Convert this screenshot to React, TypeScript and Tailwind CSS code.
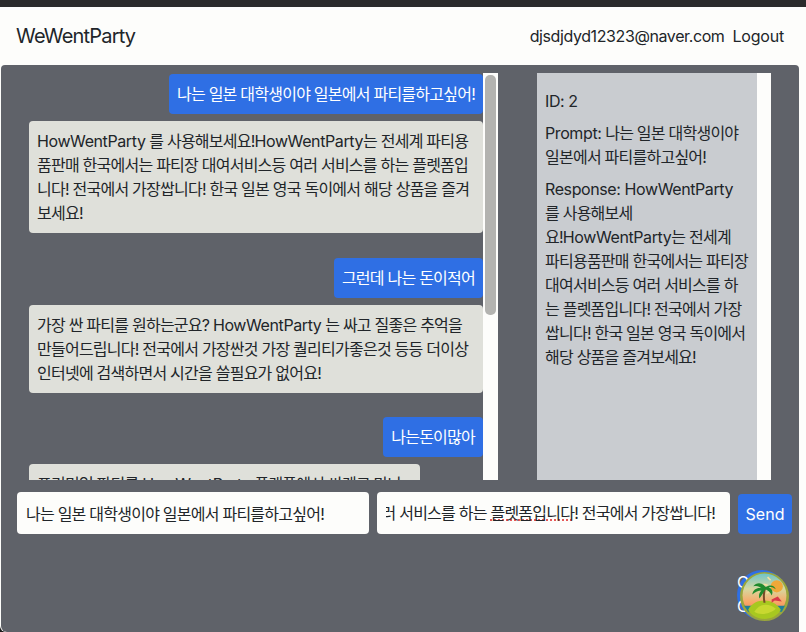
import React from "react";

const Name = ({ children }: { children: React.ReactNode }) => (
  <span className="tracking-[-0.4px]">{children}</span>
);

const ResortBadge = () => (
  <svg viewBox="0 0 48 48" className="w-[49px] h-[49px]">
    <defs>
      <linearGradient id="sky" x1="0" y1="0" x2="0" y2="1">
        <stop offset="0" stopColor="#6fc4c8" />
        <stop offset="0.35" stopColor="#d6d8a0" />
        <stop offset="0.65" stopColor="#f8a868" />
        <stop offset="1" stopColor="#f06a58" />
      </linearGradient>
    </defs>
    <circle cx="24" cy="24" r="24" fill="#9aa63c" />
    <circle cx="24" cy="23" r="21.5" fill="url(#sky)" />
    <circle cx="36" cy="14" r="6" fill="#f0a838" />
    <path d="M30 8l-3-3M27 13l-4-1M29 19l-3 2" stroke="#f8e0a0" strokeWidth="1.5" />
    <path d="M4 33h40l-3 6H8z" fill="#1f7f98" />
    <path d="M8 37c4-7 10-9 16-9s12 3 16 9c-3 6-10 9-16 9s-13-3-16-9z" fill="#a8c820" />
    <path d="M14 39c3-5 7-7 11-7s7 1 10 4c-5 5-15 7-21 3z" fill="#c8d830" />
    <path d="M31 27l6-3 4 5-7-1-3 2z" fill="#d83848" />
    <path d="M23 30c-1-6-1-11 1-16l2 1c-2 5-2 10-1 15z" fill="#7a4a28" />
    <path d="M25 15c-3-5-9-5-12-1 4-1 6 0 8 2-4-1-8 1-9 6 3-3 6-4 9-4-2 2-3 5-2 8 2-3 4-6 6-9 2 1 5 3 6 6 2-4 0-7-3-8 3-1 5 0 7 2-1-4-6-5-10-2z" fill="#1f8a2c" />
  </svg>
);

const App = () => {
  return (
    <div
      className="h-screen w-full overflow-hidden bg-[#1c1c1c] flex flex-col text-[16px] leading-[24px] text-[#212529]"
      style={{ fontFamily: 'Inter, "Noto Sans CJK KR", sans-serif' }}
    >
      <div className="h-[7px] shrink-0 bg-[#2b2b2b]" />
      <div className="flex-1 flex flex-col bg-[#fdfdfb] rounded-bl-[6px] overflow-hidden pr-[7px]">
        <nav className="h-[58px] shrink-0 flex items-center justify-between pl-[16px] pr-[15px]">
          <span className="text-[20px] leading-[30px] tracking-[-0.8px]">WeWentParty</span>
          <div className="flex gap-2">
            <span className="tracking-[-0.4px]">djsdjdyd12323@naver.com</span>
            <span className="tracking-[-0.2px]">Logout</span>
          </div>
        </nav>

        <main className="relative flex-1 ml-px bg-[#5f6269] rounded-t-[4px] rounded-bl-[6px] pt-[8px] pl-[16px] pr-[8px] tracking-[-0.76px]">
          <div className="flex h-[407px]">
            <div className="w-[481px] flex bg-[#fdfdfb] overflow-hidden">
              <div className="w-[466px] bg-[#5f6269] overflow-hidden pt-px pl-[12px] flex flex-col gap-[24px]">
                <div className="flex flex-col items-end gap-[7px]">
                  <div className="bg-[#2f6fe4] text-white rounded-[4px] p-2">나는 일본 대학생이야 일본에서 파티를하고싶어!</div>
                  <div className="bg-[#dfe0da] rounded-[4px] p-2 w-full">
                    <Name>HowWentParty</Name> 를 사용해보세요!<Name>HowWentParty</Name>는 전세계 파티용품판매 한국에서는 파티장 대여서비스등 여러 서비스를 하는 플렛폼입니다! 전국에서 가장쌉니다! 한국 일본 영국 독이에서 해당 상품을 즐겨보세요!
                  </div>
                </div>
                <div className="mt-px flex flex-col items-end gap-[7px]">
                  <div className="bg-[#2f6fe4] text-white rounded-[4px] p-2">그런데 나는 돈이적어</div>
                  <div className="bg-[#dfe0da] rounded-[4px] p-2 w-full">
                    가장 싼 파티를 원하는군요? <Name>HowWentParty</Name> 는 싸고 질좋은 추억을 만들어드립니다! 전국에서 가장싼것 가장 퀄리티가좋은것 등등 더이상 인터넷에 검색하면서 시간을 쓸필요가 없어요!
                  </div>
                </div>
                <div className="flex flex-col items-end gap-[7px]">
                  <div className="bg-[#2f6fe4] text-white rounded-[4px] p-2">나는돈이많아</div>
                  <div className="self-start bg-[#dfe0da] rounded-[4px] p-2 w-[391px]">
                    프리미엄 파티를 <Name>HowWentParty</Name> 플랫폼에서 싸게로 만나보세요
                  </div>
                </div>
              </div>
              <div className="flex-1 px-[2px] pt-[2px]">
                <div className="h-[240px] rounded-[5px] bg-[#b3b3b0]" />
              </div>
            </div>

            <aside className="ml-[39px] w-[234px] flex bg-[#fdfdfb]">
              <div className="w-[220px] bg-[#c9ccd0] pt-[16px] px-[8px]">
                <p className="mb-2"><Name>ID: 2</Name></p>
                <p className="mb-2"><Name>Prompt:</Name> 나는 일본 대학생이야 일본에서 파티를하고싶어!</p>
                <p className="whitespace-nowrap">
                  <Name>Response: HowWentParty</Name>
                  <br />를 사용해보세
                  <br />요!<Name>HowWentParty</Name>는 전세계
                  <br />파티용품판매 한국에서는 파티장
                  <br />대여서비스등 여러 서비스를 하
                  <br />는 플렛폼입니다! 전국에서 가장
                  <br />쌉니다! 한국 일본 영국 독이에서
                  <br />해당 상품을 즐겨보세요!
                </p>
              </div>
            </aside>
          </div>

          <div className="flex items-end gap-[8px] mt-[12px]">
            <input
              readOnly
              value="나는 일본 대학생이야 일본에서 파티를하고싶어!"
              className="w-[352px] h-[42px] shrink-0 bg-[#fdfdfb] rounded-[4px] px-[9px] outline-none"
            />
            <div className="w-[353px] h-[42px] shrink-0 bg-[#fdfdfb] rounded-[4px] pl-[9px] pr-[15px] flex items-center">
              <div className="flex-1 min-w-0 flex justify-end overflow-hidden whitespace-nowrap">
                <span className="shrink-0">
                  파티장 대여서비스등 여러 서비스를 하는{" "}
                  <span className="underline decoration-dotted decoration-[#e03030]">플렛폼입니다</span>! 전국에서 가장쌉니다!
                </span>
              </div>
            </div>
            <button className="w-[54px] h-[40px] shrink-0 bg-[#2f6fe4] text-white rounded-[4px] tracking-normal">Send</button>
          </div>

          {/* chat launcher sits behind the round resort badge */}
          <div className="absolute left-[736px] top-[505px] w-[50px] h-[50px] rounded-full bg-[#2f6fe4] text-white tracking-normal">
            <div>O</div>
            <div>C</div>
          </div>
          <div className="absolute left-[739px] top-[507px]">
            <ResortBadge />
          </div>
        </main>
      </div>
    </div>
  );
};

export default App;
